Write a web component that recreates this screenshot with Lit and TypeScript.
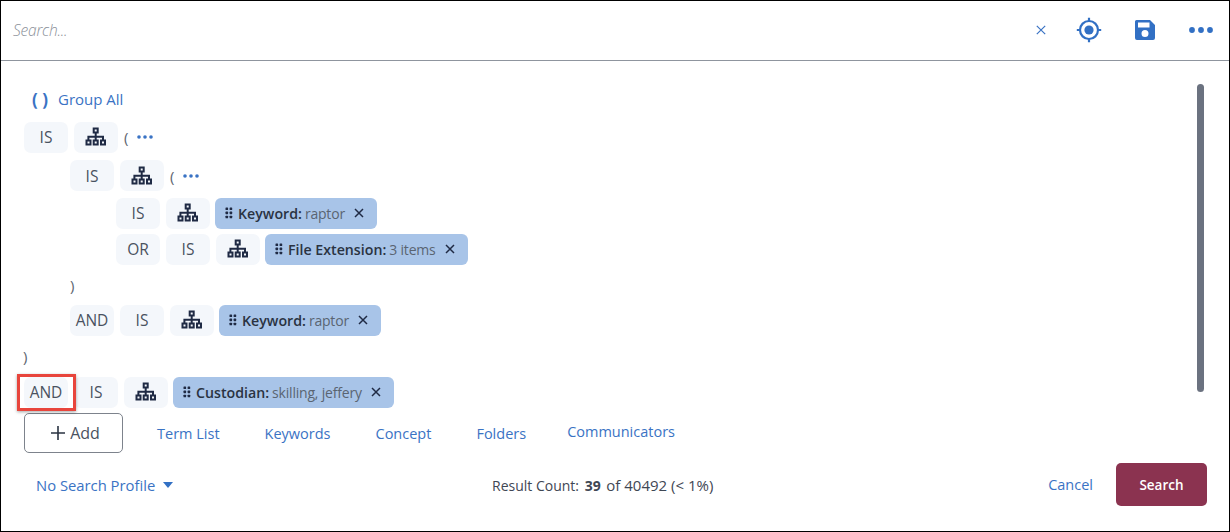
import { LitElement, html, css } from "lit";
import { customElement } from "lit/decorators.js";

const hierarchy = html`<svg width="22" height="20" viewBox="0 0 22 20" fill="none" stroke="#1f2a44" stroke-width="2">
  <rect x="8.7" y="1.5" width="4" height="4"/>
  <path d="M10.7 5.500V9.700M3.400 13V9.700H18V13M10.700 9.700V13"/>
  <rect x="1.500" y="13.500" width="4" height="4"/><rect x="8.700" y="13.500" width="4" height="4"/><rect x="16" y="13.500" width="4" height="4"/>
</svg>`;
const grip = html`<svg class="grip" width="8" height="12" viewBox="0 0 8 12" fill="#1f2a44">
  <rect x="0.5" y="0.5" width="2.6" height="2.6" rx=".6"/><rect x="4.6" y="0.5" width="2.6" height="2.6" rx=".6"/>
  <rect x="0.5" y="4.6" width="2.6" height="2.6" rx=".6"/><rect x="4.6" y="4.6" width="2.6" height="2.6" rx=".6"/>
  <rect x="0.5" y="8.7" width="2.6" height="2.6" rx=".6"/><rect x="4.6" y="8.7" width="2.6" height="2.6" rx=".6"/>
</svg>`;
const close = html`<svg class="x" width="10" height="10" viewBox="0 0 10 10" stroke="#1f2a44" stroke-width="1.5"><path d="M1 1L9 9M9 1L1 9"/></svg>`;
const dots = html`<svg class="dots" width="16" height="4" viewBox="0 0 16 4" fill="#3a73c4"><circle cx="2" cy="2" r="1.800"/><circle cx="8" cy="2" r="1.800"/><circle cx="14" cy="2" r="1.800"/></svg>`;

@customElement("app-root")
export class AppRoot extends LitElement {
  static styles = css`
    :host { display: block; width: 1230px; height: 532px; font-family: "Open Sans", "Noto Sans", sans-serif; font-size: 14px; color: #3f4754; }
    * { box-sizing: border-box; }
    .frame { position: relative; width: 1230px; height: 532px; border: 1px solid #000; background: #fff; display: flex; flex-direction: column; }
    .top { height: 60px; flex: none; border-bottom: 1px solid #8f959e; display: flex; align-items: center; padding: 0 16px 2px 12px; }
    .placeholder { flex: 1; font-style: italic; font-size: 15.500px; color: #8a8f98; font-weight: 300; letter-spacing: -.2px; }
    .top-icons { display: flex; align-items: center; }
    .top-icons svg { display: block; }
    .clear { margin-right: 30px; }
    .target { margin-right: 32px; }
    .save { margin-right: 33px; }
    .body { flex: 1; display: flex; flex-direction: column; padding: 19px 0 0 23px; }
    .group-all { display: flex; align-items: center; height: 38px; padding: 0 0 0 8px; color: #3a73c4; font-size: 15px; }
    .paren-b { font-weight: 700; font-size: 17px; width: 26px; white-space: nowrap; }
    .row { display: flex; align-items: center; height: 36px; gap: 6px; }
    .row.tall { height: 38px; }
    .row.taller { height: 39px; }
    .l1 { padding-left: 46px; }
    .l2 { padding-left: 92px; }
    .chip { width: 44px; height: 31px; border-radius: 7px; background: #f4f7fb; display: flex; align-items: center; justify-content: center; font-size: 15.500px; color: #4a525f; flex: none; }
    .tag { display: flex; align-items: center; height: 31px; border-radius: 6px; background: #a8c4e8; padding: 0 13px 0 10px; color: #5a6472; white-space: nowrap; margin-left: -1px; font-size: 14px; letter-spacing: -.2px; }
    .tag .grip { margin-right: 5px; }
    .tag b { color: #2a3342; font-weight: 600; margin-right: 3px; font-size: 14.200px; letter-spacing: 0; }
    .tag .x { margin-left: 9px; }
    .paren { color: #5d6570; font-size: 15px; }
    .row .dots { margin-left: 3px; }
    .close-paren { height: 35px; display: flex; align-items: center; color: #5d6570; font-size: 15px; }
    .root-close { margin-left: -1px; height: 36px; }
    .annot { position: relative; }
    .annot::after { content: ""; position: absolute; left: -7px; top: -3px; right: -8px; bottom: -3px; border: 3px solid #e8453c; box-shadow: 0 1px 3px rgba(0,0,0,.35); }
    .actions { display: flex; align-items: center; height: 40px; margin-top: 3px; }
    .add { width: 99px; height: 40px; border: 1px solid #7d838c; border-radius: 5px; display: flex; align-items: center; justify-content: center; gap: 5px; color: #4a5260; font-size: 16px; padding-left: 4px; flex: none; }
    .links { display: flex; gap: 45px; margin-left: 34px; color: #3a73c4; font-size: 14.500px; }
    .links span:last-child { margin-left: -4px; margin-top: -2px; }
    .foot { display: flex; align-items: center; height: 43px; margin-top: 10px; padding: 0 22px 0 12px; }
    .profile { width: 456px; color: #3a73c4; display: flex; align-items: center; gap: 8px; flex: none; font-size: 14.800px; }
    .count { flex: 1; font-size: 14px; color: #3f4754; white-space: nowrap; }
    .count b { font-weight: 700; margin: 0 2px; }
    .count .rest { font-size: 15px; }
    .cancel { color: #3a73c4; margin-right: 23px; font-size: 14.500px; }
    .search { width: 91px; height: 43px; border-radius: 5px; background: #8b3350; color: #fff; font-size: 13.500px; font-weight: 600; display: flex; align-items: center; justify-content: center; }
    .scroll { position: absolute; left: 1196px; top: 83px; width: 7px; height: 308px; border-radius: 4px; background: #6b7280; }
  `;

  private tag(k: string, v: string) {
    return html`<div class="tag">${grip}<b>${k}:</b>${v}${close}</div>`;
  }

  render() {
    return html`<div class="frame">
      <div class="top">
        <div class="placeholder">Search...</div>
        <div class="top-icons">
          <svg class="clear" width="10" height="10" viewBox="0 0 10 10" stroke="#3a73c4" stroke-width="1.2"><path d="M.8 .8L9.2 9.2M9.2 .8L.8 9.2"/></svg>
          <svg class="target" width="26" height="26" viewBox="0 0 26 26" fill="none" stroke="#3270c4" stroke-width="2.2">
            <circle cx="13" cy="13" r="9"/><circle cx="13" cy="13" r="4.600" fill="#3270c4" stroke="none"/>
            <path d="M13 .8V4.200M13 21.800V25.200M.8 13H4.200M21.800 13H25.200"/>
          </svg>
          <svg class="save" width="22" height="22" viewBox="0 0 22 22"><path fill="#3270c4" fill-rule="evenodd" d="M2.500 1H16L21 6V19A2 2 0 0 1 19 21H3A2 2 0 0 1 1 19V2.500A1.500 1.500 0 0 1 2.500 1ZM4 3.500V8.500H15.500V3.500ZM11 11A3.500 3.500 0 1 0 11 18A3.500 3.500 0 1 0 11 11Z"/></svg>
          <svg width="24" height="6" viewBox="0 0 24 6" fill="#3270c4"><circle cx="3" cy="3" r="2.900"/><circle cx="12" cy="3" r="2.900"/><circle cx="21" cy="3" r="2.900"/></svg>
        </div>
      </div>
      <div class="body">
        <div class="group-all"><span class="paren-b">( )</span>Group All</div>
        <div class="row tall"><div class="chip">IS</div><div class="chip">${hierarchy}</div><span class="paren">(</span>${dots}</div>
        <div class="row taller l1"><div class="chip">IS</div><div class="chip">${hierarchy}</div><span class="paren">(</span>${dots}</div>
        <div class="row l2"><div class="chip">IS</div><div class="chip">${hierarchy}</div>${this.tag("Keyword", "raptor")}</div>
        <div class="row l2"><div class="chip">OR</div><div class="chip">IS</div><div class="chip">${hierarchy}</div>${this.tag("File Extension", "3 items")}</div>
        <div class="close-paren l1">)</div>
        <div class="row l1"><div class="chip">AND</div><div class="chip">IS</div><div class="chip">${hierarchy}</div>${this.tag("Keyword", "raptor")}</div>
        <div class="close-paren root-close">)</div>
        <div class="row"><div class="chip annot">AND</div><div class="chip">IS</div><div class="chip">${hierarchy}</div>${this.tag("Custodian", "skilling, jeffery")}</div>
        <div class="actions">
          <div class="add"><svg width="14" height="14" viewBox="0 0 14 14" stroke="#2a3342" stroke-width="1.600"><path d="M7 0V14M0 7H14"/></svg>Add</div>
          <div class="links"><span>Term List</span><span>Keywords</span><span>Concept</span><span>Folders</span><span>Communicators</span></div>
        </div>
        <div class="foot">
          <div class="profile">No Search Profile <svg width="10" height="6" viewBox="0 0 10 6" fill="#3270c4"><path d="M0 0H10L5 6Z"/></svg></div>
          <div class="count">Result Count: <b>39</b> <span class="rest">of 40492 (&lt; 1%)</span></div>
          <div class="cancel">Cancel</div>
          <div class="search">Search</div>
        </div>
      </div>
      <div class="scroll"></div>
    </div>`;
  }
}
